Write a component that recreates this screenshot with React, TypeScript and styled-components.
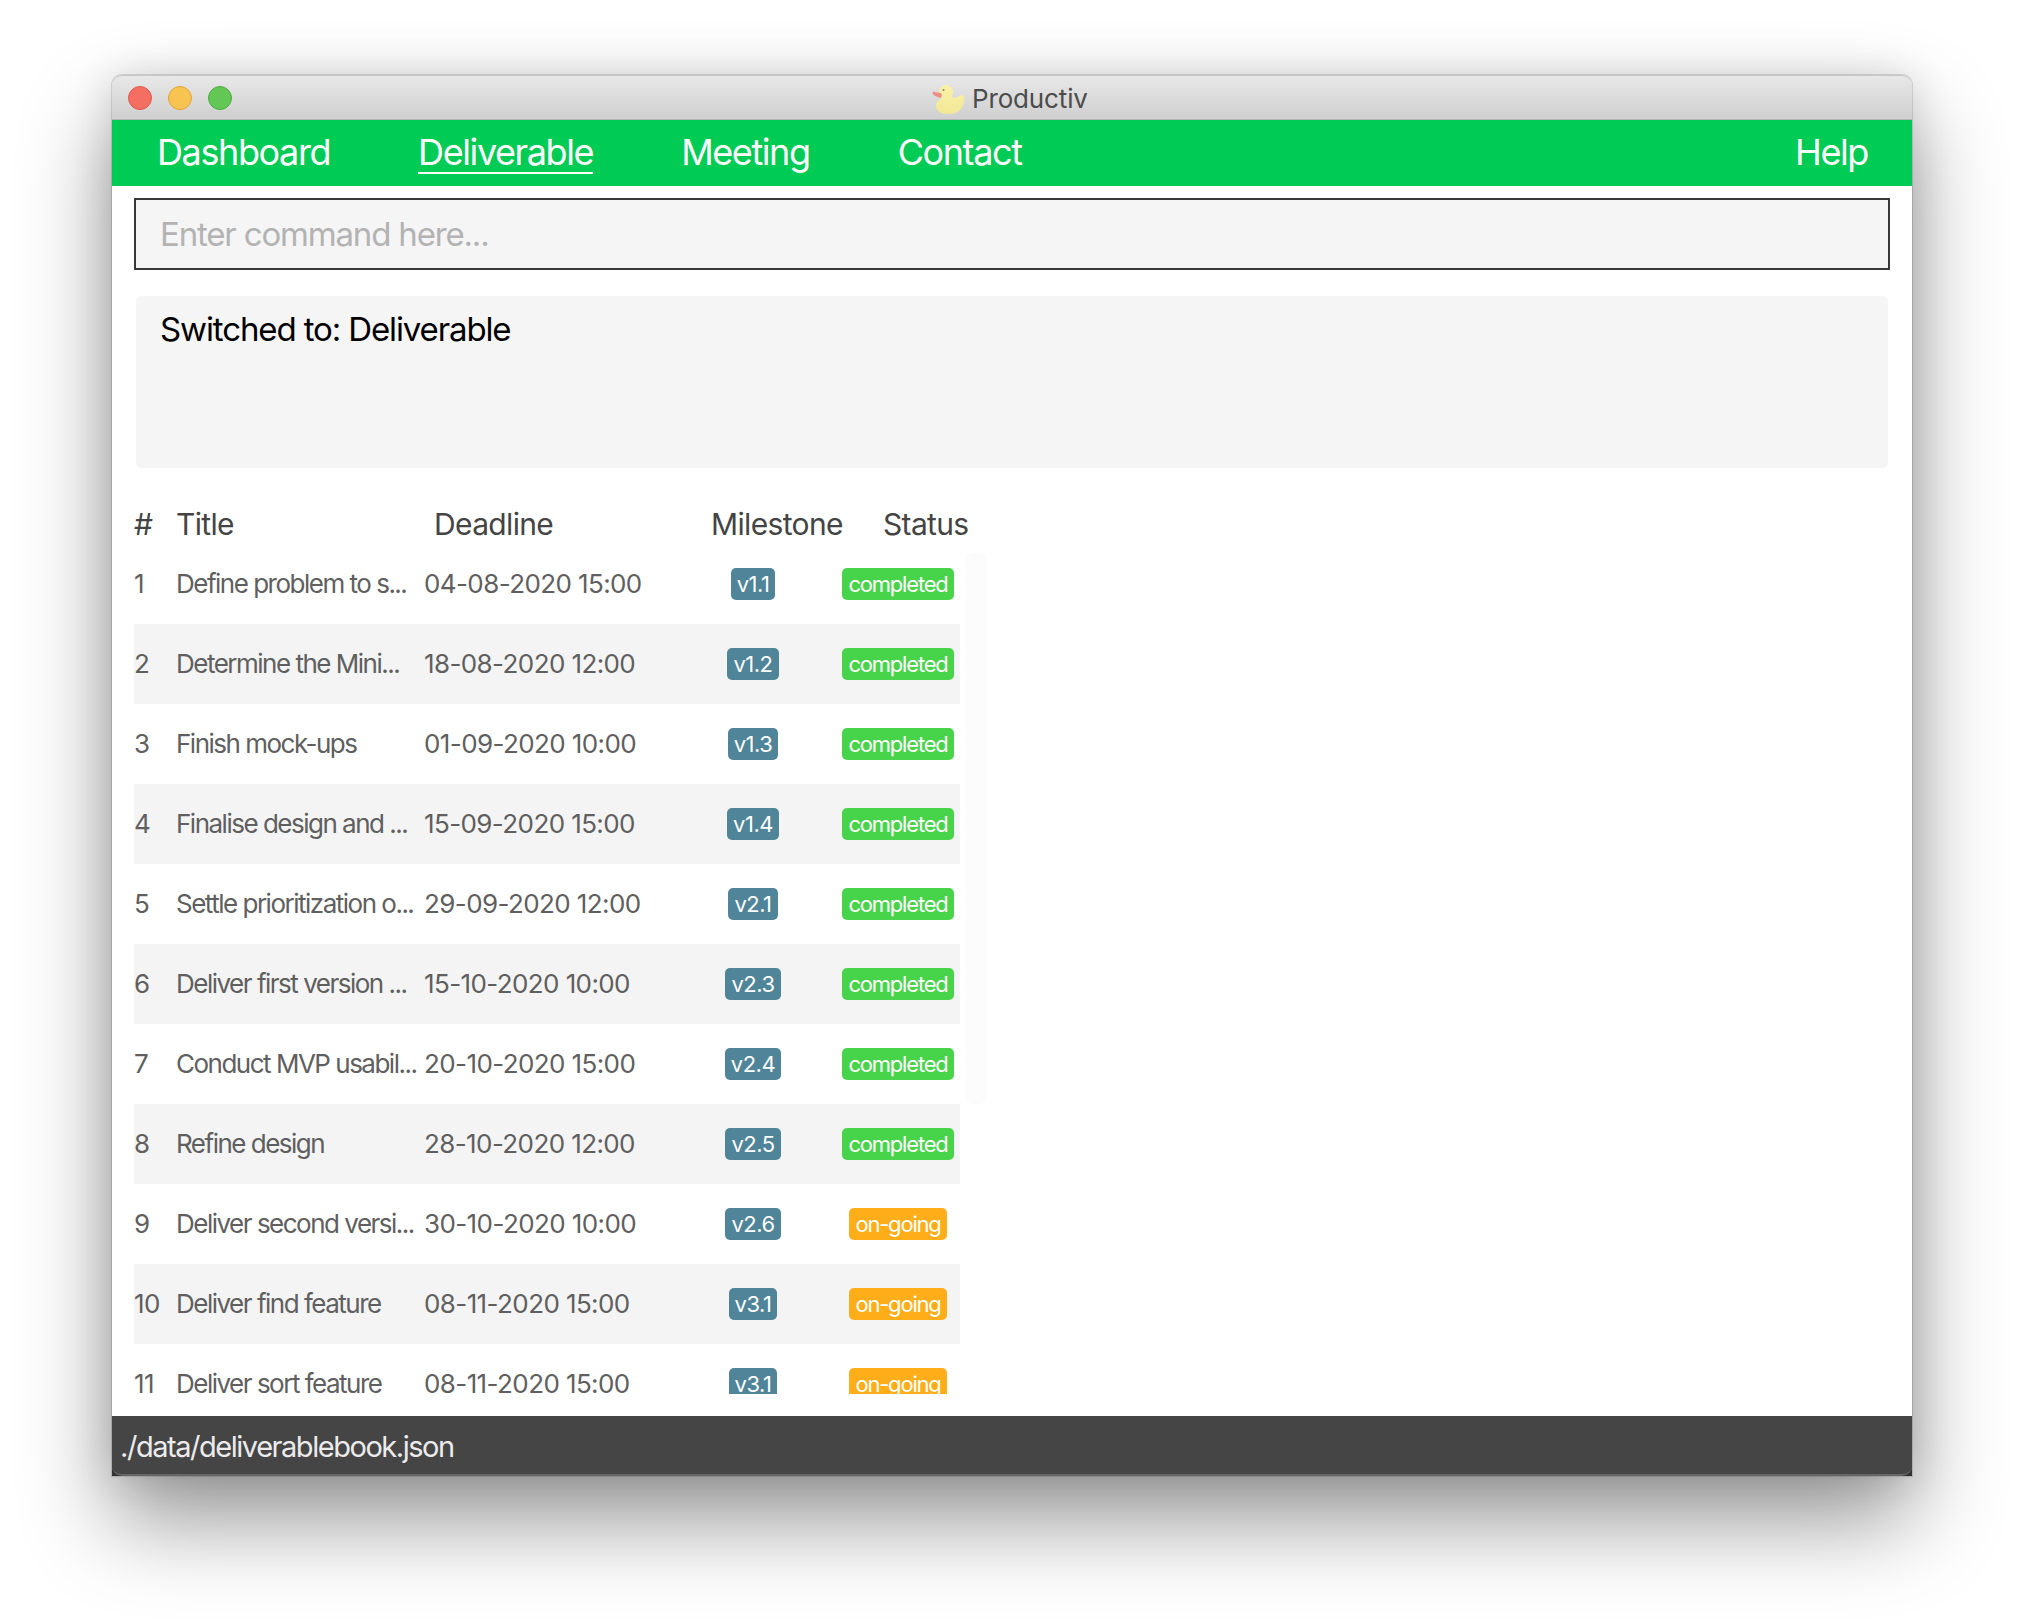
import React from "react";
import styled, { createGlobalStyle } from "styled-components";

const Global = createGlobalStyle`
  html, body { margin: 0; padding: 0; background: #fff; }
  * { box-sizing: border-box; }
`;

const Page = styled.div`
  width: 2024px;
  height: 1624px;
  padding: 75px 112px 148px;
  font-family: Inter, "Liberation Sans", sans-serif;
  overflow: hidden;
`;

const Win = styled.div`
  height: 1401px;
  display: flex;
  flex-direction: column;
  background: #fff;
  border-radius: 10px 10px 0 0;
  box-shadow: 0 0 0 1px rgba(0, 0, 0, 0.12), 0 44px 90px rgba(0, 0, 0, 0.42), 0 0 40px rgba(0, 0, 0, 0.12);
`;

const TitleBar = styled.div`
  height: 45px;
  flex: none;
  display: flex;
  align-items: center;
  padding-left: 16px;
  position: relative;
  border-radius: 10px 10px 0 0;
  border-top: 1px solid #c6c6c6;
  border-bottom: 1px solid #b4b4b4;
  background: linear-gradient(#e8e8e8, #cfcfcf);
`;

const Dots = styled.div`
  display: flex;
  gap: 16px;
`;

const Dot = styled.span<{ $bg: string; $line: string }>`
  width: 24px;
  height: 24px;
  border-radius: 50%;
  background: ${(p) => p.$bg};
  border: 1px solid ${(p) => p.$line};
`;

const WinTitle = styled.div`
  position: absolute;
  left: 820px;
  top: 7px;
  display: flex;
  align-items: center;
  gap: 6px;
  font-size: 26px;
  line-height: 32px;
  letter-spacing: -0.15px;
  color: #4c4c4c;
`;

const Nav = styled.nav`
  height: 66px;
  flex: none;
  display: flex;
  align-items: center;
  padding: 0 44px 0 45px;
  background: #00cb54;
  color: #fff;
  font-size: 36px;
  letter-spacing: -1.4px;
`;

const NavItem = styled.span<{ $active?: boolean; $end?: boolean }>`
  margin-right: ${(p) => (p.$end ? 0 : "88px")};
  margin-left: ${(p) => (p.$end ? "auto" : 0)};
  line-height: 40px;
  border-bottom: 2px solid ${(p) => (p.$active ? "#fff" : "transparent")};
`;

const Body = styled.div`
  flex: 1;
  min-height: 0;
  display: flex;
  flex-direction: column;
  padding: 12px 22px 22px;
`;

const Command = styled.div`
  height: 72px;
  flex: none;
  display: flex;
  align-items: center;
  padding-left: 24px;
  background: #f5f5f5;
  border: 2px solid #383838;
  color: #b3b3b3;
  font-size: 33px;
  letter-spacing: -1.17px;
`;

const Message = styled.div`
  height: 172px;
  flex: none;
  margin: 26px 2px 0;
  padding: 12px 24px;
  background: #f5f5f5;
  border-radius: 6px;
  color: #000;
  font-size: 33px;
  line-height: 42px;
  letter-spacing: -1.12px;
`;

const Head = styled.div`
  flex: none;
  margin-top: 37px;
  height: 39px;
  display: grid;
  grid-template-columns: 42px 258px 277px 172px auto;
  align-items: center;
  color: #444;
  font-size: 30px;
  letter-spacing: -0.65px;
  line-height: 39px;
`;

const ListArea = styled.div`
  flex: 1;
  min-height: 0;
  position: relative;
`;

const List = styled.div`
  height: 100%;
  overflow: hidden;
  width: 826px;
`;

const ScrollThumb = styled.div`
  position: absolute;
  left: 832px;
  top: 9px;
  width: 20px;
  height: 551px;
  border-radius: 8px;
  background: #fcfcfc;
`;

const Row = styled.div<{ $alt: boolean }>`
  height: 80px;
  display: grid;
  grid-template-columns: 42px 248px 266px 126px 144px;
  align-items: center;
  background: ${(p) => (p.$alt ? "#f4f4f4" : "#fff")};
  color: #5f5f5f;
  white-space: nowrap;
`;

const Cell = styled.span<{ $tight?: boolean }>`
  margin-bottom: 2px;
  font-size: 26px;
  letter-spacing: ${(p) => (p.$tight ? "-1.5px" : "-0.6px")};
`;

const Pill = styled.span<{ $bg: string; $tight?: boolean }>`
  justify-self: center;
  height: 32px;
  padding: 0 6px;
  border-radius: 5px;
  background: ${(p) => p.$bg};
  color: #fff;
  font-size: 22px;
  line-height: 32px;
  letter-spacing: ${(p) => (p.$tight ? "-1.2px" : "-0.5px")};
`;

const StatusCell = styled.div`
  display: flex;
  justify-content: center;
  padding-left: 20px;
`;

const Foot = styled.div`
  height: 60px;
  flex: none;
  background: #333;
`;

const FootInner = styled.div`
  height: 60px;
  display: flex;
  align-items: center;
  padding: 2px 0 0 8px;
  background: #454545;
  border-bottom: 2px solid #666;
  border-radius: 0 0 10px 10px;
  color: #ebebeb;
  font-size: 29px;
  letter-spacing: -1.46px;
`;

const rows = [
  ["Define problem to s...", "04-08-2020 15:00", "v1.1", "completed"],
  ["Determine the Mini...", "18-08-2020 12:00", "v1.2", "completed"],
  ["Finish mock-ups", "01-09-2020 10:00", "v1.3", "completed"],
  ["Finalise design and ...", "15-09-2020 15:00", "v1.4", "completed"],
  ["Settle prioritization o...", "29-09-2020 12:00", "v2.1", "completed"],
  ["Deliver first version ...", "15-10-2020 10:00", "v2.3", "completed"],
  ["Conduct MVP usabil...", "20-10-2020 15:00", "v2.4", "completed"],
  ["Refine design", "28-10-2020 12:00", "v2.5", "completed"],
  ["Deliver second versi...", "30-10-2020 10:00", "v2.6", "on-going"],
  ["Deliver find feature", "08-11-2020 15:00", "v3.1", "on-going"],
  ["Deliver sort feature", "08-11-2020 15:00", "v3.1", "on-going"],
];

const Duck = () => (
  <svg width="34" height="32" viewBox="0 0 34 32">
    <defs>
      <linearGradient id="duckBody" x1="0" y1="0" x2="0" y2="1">
        <stop offset="0" stopColor="#f9f1a8" />
        <stop offset="1" stopColor="#f3e796" />
      </linearGradient>
    </defs>
    <path
      d="M4 23c0-4 3-6 6-8-2-1-3-3-3-6 0-4 3-7 7-7s7 3 7 7c0 2-1 4-2 5 3 1 5 1 8-1 2-1 4-1 5 0 1 4 0 10-4 14-3 3-7 4-12 4-7 0-12-3-12-8z"
      fill="url(#duckBody)"
    />
    <path d="M1 8.500c3 .5 6 1 9 2.500l-1 4c-3-.5-6-2-8.500-4z" fill="#ee8f86" />
    <circle cx="11.500" cy="7" r="1.100" fill="#8c8a6c" />
  </svg>
);

export default function App() {
  return (
    <Page>
      <Global />
      <Win>
        <TitleBar>
          <Dots>
            <Dot $bg="#f56e62" $line="#e05a50" />
            <Dot $bg="#f8c350" $line="#dfa63a" />
            <Dot $bg="#62c755" $line="#50ad45" />
          </Dots>
          <WinTitle>
            <Duck />
            Productiv
          </WinTitle>
        </TitleBar>
        <Nav>
          <NavItem>Dashboard</NavItem>
          <NavItem $active>Deliverable</NavItem>
          <NavItem>Meeting</NavItem>
          <NavItem>Contact</NavItem>
          <NavItem $end>Help</NavItem>
        </Nav>
        <Body>
          <Command>Enter command here...</Command>
          <Message>Switched to: Deliverable</Message>
          <Head>
            <span>#</span>
            <span>Title</span>
            <span>Deadline</span>
            <span>Milestone</span>
            <span>Status</span>
          </Head>
          <ListArea>
            <ScrollThumb />
            <List>
              {rows.map((r, i) => (
                <Row key={i} $alt={i % 2 === 1}>
                  <Cell>{i + 1}</Cell>
                  <Cell $tight>{r[0]}</Cell>
                  <Cell>{r[1]}</Cell>
                  <Pill $bg="#4f8499">{r[2]}</Pill>
                  <StatusCell>
                    <Pill $tight $bg={r[3] === "completed" ? "#48d44a" : "#ffae1a"}>
                      {r[3]}
                    </Pill>
                  </StatusCell>
                </Row>
              ))}
            </List>
          </ListArea>
        </Body>
        <Foot>
          <FootInner>./data/deliverablebook.json</FootInner>
        </Foot>
      </Win>
    </Page>
  );
}
